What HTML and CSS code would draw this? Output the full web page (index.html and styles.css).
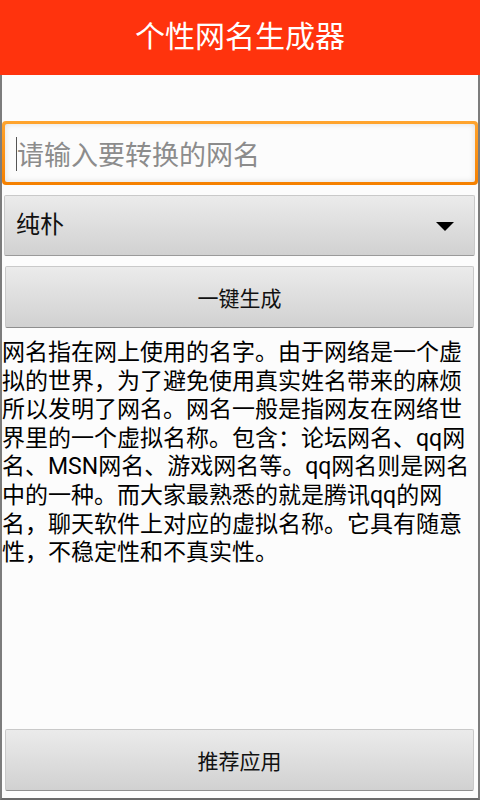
FILE: index.html
```html
<!DOCTYPE html>
<html lang="zh">
<head>
<meta charset="utf-8">
<title>个性网名生成器</title>
<link rel="stylesheet" href="styles.css">
</head>
<body>
<div class="app">
  <header class="header"><h1 class="title">个性网名生成器</h1></header>
  <main class="content">
    <div class="input-frame">
      <div class="input-inner">
        <span class="cursor"></span>
        <span class="placeholder">请输入要转换的网名</span>
      </div>
    </div>
    <div class="spinner">
      <span class="spinner-text">纯朴</span>
      <svg class="arrow" width="18" height="9" viewBox="0 0 18 9"><polygon points="0,0 18,0 9,9" fill="#000"/></svg>
    </div>
    <div class="btn btn-gen">一键生成</div>
    <p class="desc">网名指在网上使用的名字。由于网络是一个虚<br>拟的世界，为了避免使用真实姓名带来的麻烦<br>所以发明了网名。网名一般是指网友在网络世<br>界里的一个虚拟名称。包含：论坛网名、qq网<br>名、MSN网名、游戏网名等。qq网名则是网名<br>中的一种。而大家最熟悉的就是腾讯qq的网<br>名，聊天软件上对应的虚拟名称。它具有随意<br>性，不稳定性和不真实性。</p>
    <div class="btn btn-rec">推荐应用</div>
  </main>
</div>
</body>
</html>
```
FILE: styles.css
```css
html, body {
  margin: 0;
  padding: 0;
}
body {
  font-family: "Roboto", "Noto Sans CJK SC", sans-serif;
  background: #fcfcfc;
}
.app {
  width: 480px;
  height: 800px;
  display: flex;
  flex-direction: column;
  overflow: hidden;
}
.header {
  height: 75px;
  flex: none;
  background: #ff330d;
  display: flex;
  align-items: center;
  justify-content: center;
}
.title {
  margin: 0;
  color: #fff;
  font-size: 30px;
  font-weight: normal;
  line-height: 1;
  padding-bottom: 2px;
}
.content {
  flex: 1;
  display: flex;
  flex-direction: column;
  border-left: 2px solid #7c7c7c;
  border-right: 2px solid #7c7c7c;
  border-bottom: 2px solid #6a6a6a;
  background: #fcfcfc;
}
.input-frame {
  margin-top: 46px;
  height: 64px;
  padding: 3px;
  box-sizing: border-box;
  border-radius: 4px;
  background: linear-gradient(#ffa42e, #f58000);
}
.input-inner {
  height: 100%;
  background: #fcfcfc;
  border-radius: 2px;
  box-shadow: inset 0 0 6px rgba(0,0,0,0.12);
  display: flex;
  align-items: center;
  padding-left: 11px;
}
.cursor {
  width: 1px;
  height: 34px;
  background: #555;
  margin-top: 2px;
}
.placeholder {
  font-size: 27px;
  color: #8c8c8c;
  line-height: 1;
  margin-top: 6px;
}
.spinner {
  margin: 10px 3px 0 2px;
  height: 61px;
  box-sizing: border-box;
  border: 1px solid #c9c9c9;
  border-bottom-color: #9a9a9a;
  border-radius: 2px;
  background: linear-gradient(#ebebeb, #d1d1d1);
  display: flex;
  align-items: center;
  justify-content: space-between;
  padding: 0 20px 0 11px;
}
.spinner-text {
  font-size: 24px;
  color: #111;
  line-height: 1;
  padding-bottom: 2px;
}
.arrow {
  display: block;
  margin-top: 1px;
}
.btn {
  margin: 10px 4px 0 3px;
  height: 62px;
  box-sizing: border-box;
  border: 1px solid #c9c9c9;
  border-bottom-color: #8e8e8e;
  border-radius: 2px;
  background: linear-gradient(#ebebeb, #d1d1d1);
  display: flex;
  align-items: center;
  justify-content: center;
  font-size: 21px;
  color: #111;
}
.desc {
  margin: 0;
  padding: 11px 0 0 0;
  font-size: 23px;
  line-height: 28.6px;
  color: #000;
  white-space: nowrap;
}
.btn-rec {
  margin-top: auto;
  margin-bottom: 7px;
}
```
